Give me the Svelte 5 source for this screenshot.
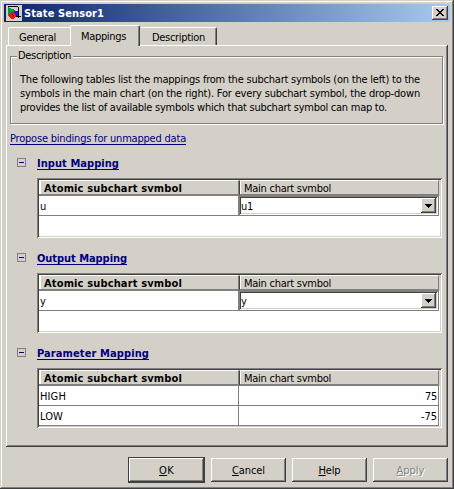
<script>
  const intro = [
    ['The following tables list the mappings from the subchart symbols (on the left) to the', 400],
    ['symbols in the main chart (on the right). For every subchart symbol, the drop-down', 400],
    ['provides the list of available symbols which that subchart symbol can map to.', 367]
  ];
  const sections = [
    { title: 'Input Mapping', width: 82, rows: [{ name: 'u', w: 6, value: 'u1', vw: 12, combo: true }] },
    { title: 'Output Mapping', width: 90, rows: [{ name: 'y', w: 6, value: 'y', vw: 6, combo: true }] },
    {
      title: 'Parameter Mapping',
      width: 112,
      rows: [
        { name: 'HIGH', w: 26, value: '75', vw: 12 },
        { name: 'LOW', w: 23, value: '-75', vw: 16 }
      ]
    }
  ];
  const buttons = [
    { label: 'OK', width: 15, kind: 'default' },
    { label: 'Cancel', width: 33 },
    { label: 'Help', width: 22 },
    { label: 'Apply', width: 28, kind: 'disabled' }
  ];

  // Tracks a label so that it fills the given width.
  function fit(node, width) {
    const natural = node.getBoundingClientRect().width;
    const count = node.textContent.length;
    node.style.letterSpacing = `${(width - natural) / count}px`;
  }
</script>

<div class="dialog">
  <header class="title">
    <svg class="app" width="16" height="16" viewBox="0 0 16 16" shape-rendering="crispEdges">
      <rect width="16" height="16" fill="#d4d0c8" />
      <path d="M2 2v9l4-3 3-3z" fill="#00a030" />
      <path d="M8 6h5v5H8z" fill="#1020f0" />
      <path d="M5 7h3v1h1v1h1v3H9v1H8v1H5v-1H4v-1H3V9h1V8h1z" fill="#f01010" />
      <path d="M2 1h10v1H2zM12 2h1v11h-1zM10 11h5v1h-5zM6 9h1v1H6zM7 10h1v1H7z" fill="#000" />
    </svg>
    <span class="name" use:fit={80}>State Sensor1</span>
    <button class="close" aria-label="Close">
      <svg width="8" height="7" viewBox="0 0 8 7" shape-rendering="crispEdges">
        <path d="M0 0h2v1h1v1h2V1h1V0h2v1H7v1H6v1H5v1h1v1h1v1h1v1H6V6H5V5H3v1H2v1H0V6h1V5h1V4h1V3H2V2H1V1H0z" />
      </svg>
    </button>
  </header>

  <nav class="tabs">
    <div class="tab first"><span use:fit={37}>General</span></div>
    <div class="tab active"><span use:fit={45}>Mappings</span></div>
    <div class="tab last"><span use:fit={53}>Description</span></div>
  </nav>

  <main class="panel">
    <section class="group">
      <div class="legend"><span use:fit={53}>Description</span></div>
      {#each intro as [line, width]}
        <div class="line"><span use:fit={width}>{line}</span></div>
      {/each}
    </section>

    <div class="propose"><span class="link" use:fit={176}>Propose bindings for unmapped data</span></div>

    {#each sections as s}
      <section class="mapping">
        <div class="heading">
          <i class="toggle"></i>
          <span class="link bold" use:fit={s.width}>{s.title}</span>
        </div>
        <div class="table">
          <div class="row head">
            <div class="th bold"><span use:fit={138}>Atomic subchart symbol</span></div>
            <div class="th second"><span use:fit={87}>Main chart symbol</span></div>
          </div>
          {#each s.rows as r}
            <div class="row">
              <div class="td"><span use:fit={r.w}>{r.name}</span></div>
              {#if r.combo}
                <div class="td val combocell">
                  <div class="combo">
                    <span use:fit={r.vw}>{r.value}</span>
                    <div class="drop">
                      <svg width="7" height="4" viewBox="0 0 7 4" shape-rendering="crispEdges"><path d="M0 0h7v1H6v1H5v1H4v1H3V3H2V2H1V1H0z" /></svg>
                    </div>
                  </div>
                </div>
              {:else}
                <div class="td val num"><span use:fit={r.vw}>{r.value}</span></div>
              {/if}
            </div>
          {/each}
        </div>
      </section>
    {/each}
  </main>

  <footer class="actions">
    {#each buttons as b}
      <button class="btn {b.kind ?? ''}"><span use:fit={b.width}><u>{b.label[0]}</u>{b.label.slice(1)}</span></button>
    {/each}
  </footer>
</div>

<style>
  .dialog, .dialog :global(*) { box-sizing: border-box; }
  .dialog {
    width: 454px;
    height: 489px;
    padding: 4px;
    background: #d4d0c8;
    color: #000;
    font: 11px/14px "DejaVu Sans Condensed", "DejaVu Sans", sans-serif;
    font-stretch: condensed;
    box-shadow: inset -1px -1px #404040, inset 1px 1px #d4d0c8, inset -2px -2px #808080, inset 2px 2px #fff;
    overflow: hidden;
  }
  span { display: inline-block; white-space: pre; }
  .bold { font-weight: bold; }
  button { font: inherit; border: 0; padding: 0; background: #d4d0c8; color: #000; display: flex; align-items: center; justify-content: center; }

  .title { display: flex; align-items: center; height: 18px; padding: 0 2px; background: linear-gradient(90deg, #0a246a, #a6caf0); }
  .name { margin: 1px 0 0 2px; color: #fff; font-weight: bold; }
  .close { width: 16px; height: 14px; margin-left: auto; padding: 0 0 1px; box-shadow: inset -1px -1px #404040, inset 1px 1px #fff, inset -2px -2px #808080; }

  .tabs { display: flex; align-items: flex-end; height: 23px; padding-left: 4px; }
  .tab { height: 18px; padding: 3px 0 0 10px; border-top: 1px solid #fff; border-left: 1px solid #fff; border-top-left-radius: 2px; }
  .first { width: 62px; }
  .active { width: 70px; height: 21px; margin-bottom: -1px; padding-top: 4px; position: relative; background: #d4d0c8; border-right: 1px solid #404040; border-top-right-radius: 2px; box-shadow: inset -1px 0 #808080; }
  .last { width: 77px; padding-left: 11px; border-left-color: transparent; border-right: 1px solid #404040; border-top-right-radius: 2px; box-shadow: inset -1px 0 #808080; }

  .panel { width: 442px; height: 402px; margin-left: 2px; padding: 11px 4px 0; box-shadow: inset -1px -1px #404040, inset 1px 1px #fff, inset -2px -2px #808080; }
  .group { position: relative; width: 433px; height: 68px; padding: 16px 0 0 9px; border: 1px solid #808080; box-shadow: 1px 1px #fff, inset 1px 1px #fff; }
  .legend { position: absolute; top: -8px; left: 6px; height: 14px; padding: 0 2px 0 1px; background: #d4d0c8; }
  .line { height: 14px; }

  .link { color: #000080; height: 13px; border-bottom: 1px solid #000080; line-height: 14px; }
  .propose { display: flex; height: 14px; margin: 8px 0 -1px; }
  .mapping { height: 95px; }
  .heading { display: flex; align-items: flex-start; height: 33px; padding: 11px 0 0 7px; }
  .heading .link { margin: 1px 0 0 11px; overflow: hidden; }
  .toggle { width: 9px; height: 9px; margin-top: 2px; border: 1px solid #808080; background: linear-gradient(#000080, #000080) center / 5px 1px no-repeat; }

  .table { width: 405px; height: 60px; margin-left: 27px; padding: 2px; background: #fff; box-shadow: inset 1px 1px #808080, inset -1px -1px #fff, inset 2px 2px #404040, inset -2px -2px #d4d0c8; }
  .row { display: flex; width: 400px; height: 20px; }
  .head { height: 16px; width: 401px; background: #d4d0c8; }
  .th { display: flex; align-items: flex-start; width: 200px; height: 16px; padding: 0 0 0 5px; border-top: 1px solid #fff; border-bottom: 2px solid #808080; border-right: 1px solid #808080; box-shadow: inset 2px 0 #fff; line-height: 15px; }
  .th span { height: 11px; overflow: hidden; }
  .second { border-left: 1px solid #404040; box-shadow: inset 1px 0 #fff; padding-left: 4px; }
  .td { width: 200px; height: 20px; padding: 4px 0 0 1px; line-height: 14px; border-right: 1px solid #808080; border-bottom: 1px solid #808080; }
  .num { text-align: right; padding-right: 1px; }
  .combocell { padding: 0; }
  .combo { display: flex; justify-content: space-between; height: 19px; padding: 2px; background: #fff; box-shadow: inset 1px 1px #808080, inset -1px -1px #fff, inset 2px 2px #404040, inset -2px -2px #d4d0c8; }
  .combo span { margin: 2px 0 -2px; }
  .drop { width: 15px; height: 15px; display: flex; align-items: center; justify-content: center; background: #d4d0c8; box-shadow: inset -1px -1px #404040, inset 1px 1px #fff, inset -2px -2px #808080; }

  .actions { display: flex; gap: 6px; align-items: center; height: 26px; margin: 10px 0 0 124px; }
  .btn { width: 75px; height: 24px; padding-top: 2px; box-shadow: inset -1px -1px #404040, inset 1px 1px #fff, inset -2px -2px #808080; }
  .default { width: 77px; height: 26px; border: 1px solid #404040; }
  .disabled { color: #808080; text-shadow: 1px 1px #fff; }
</style>
